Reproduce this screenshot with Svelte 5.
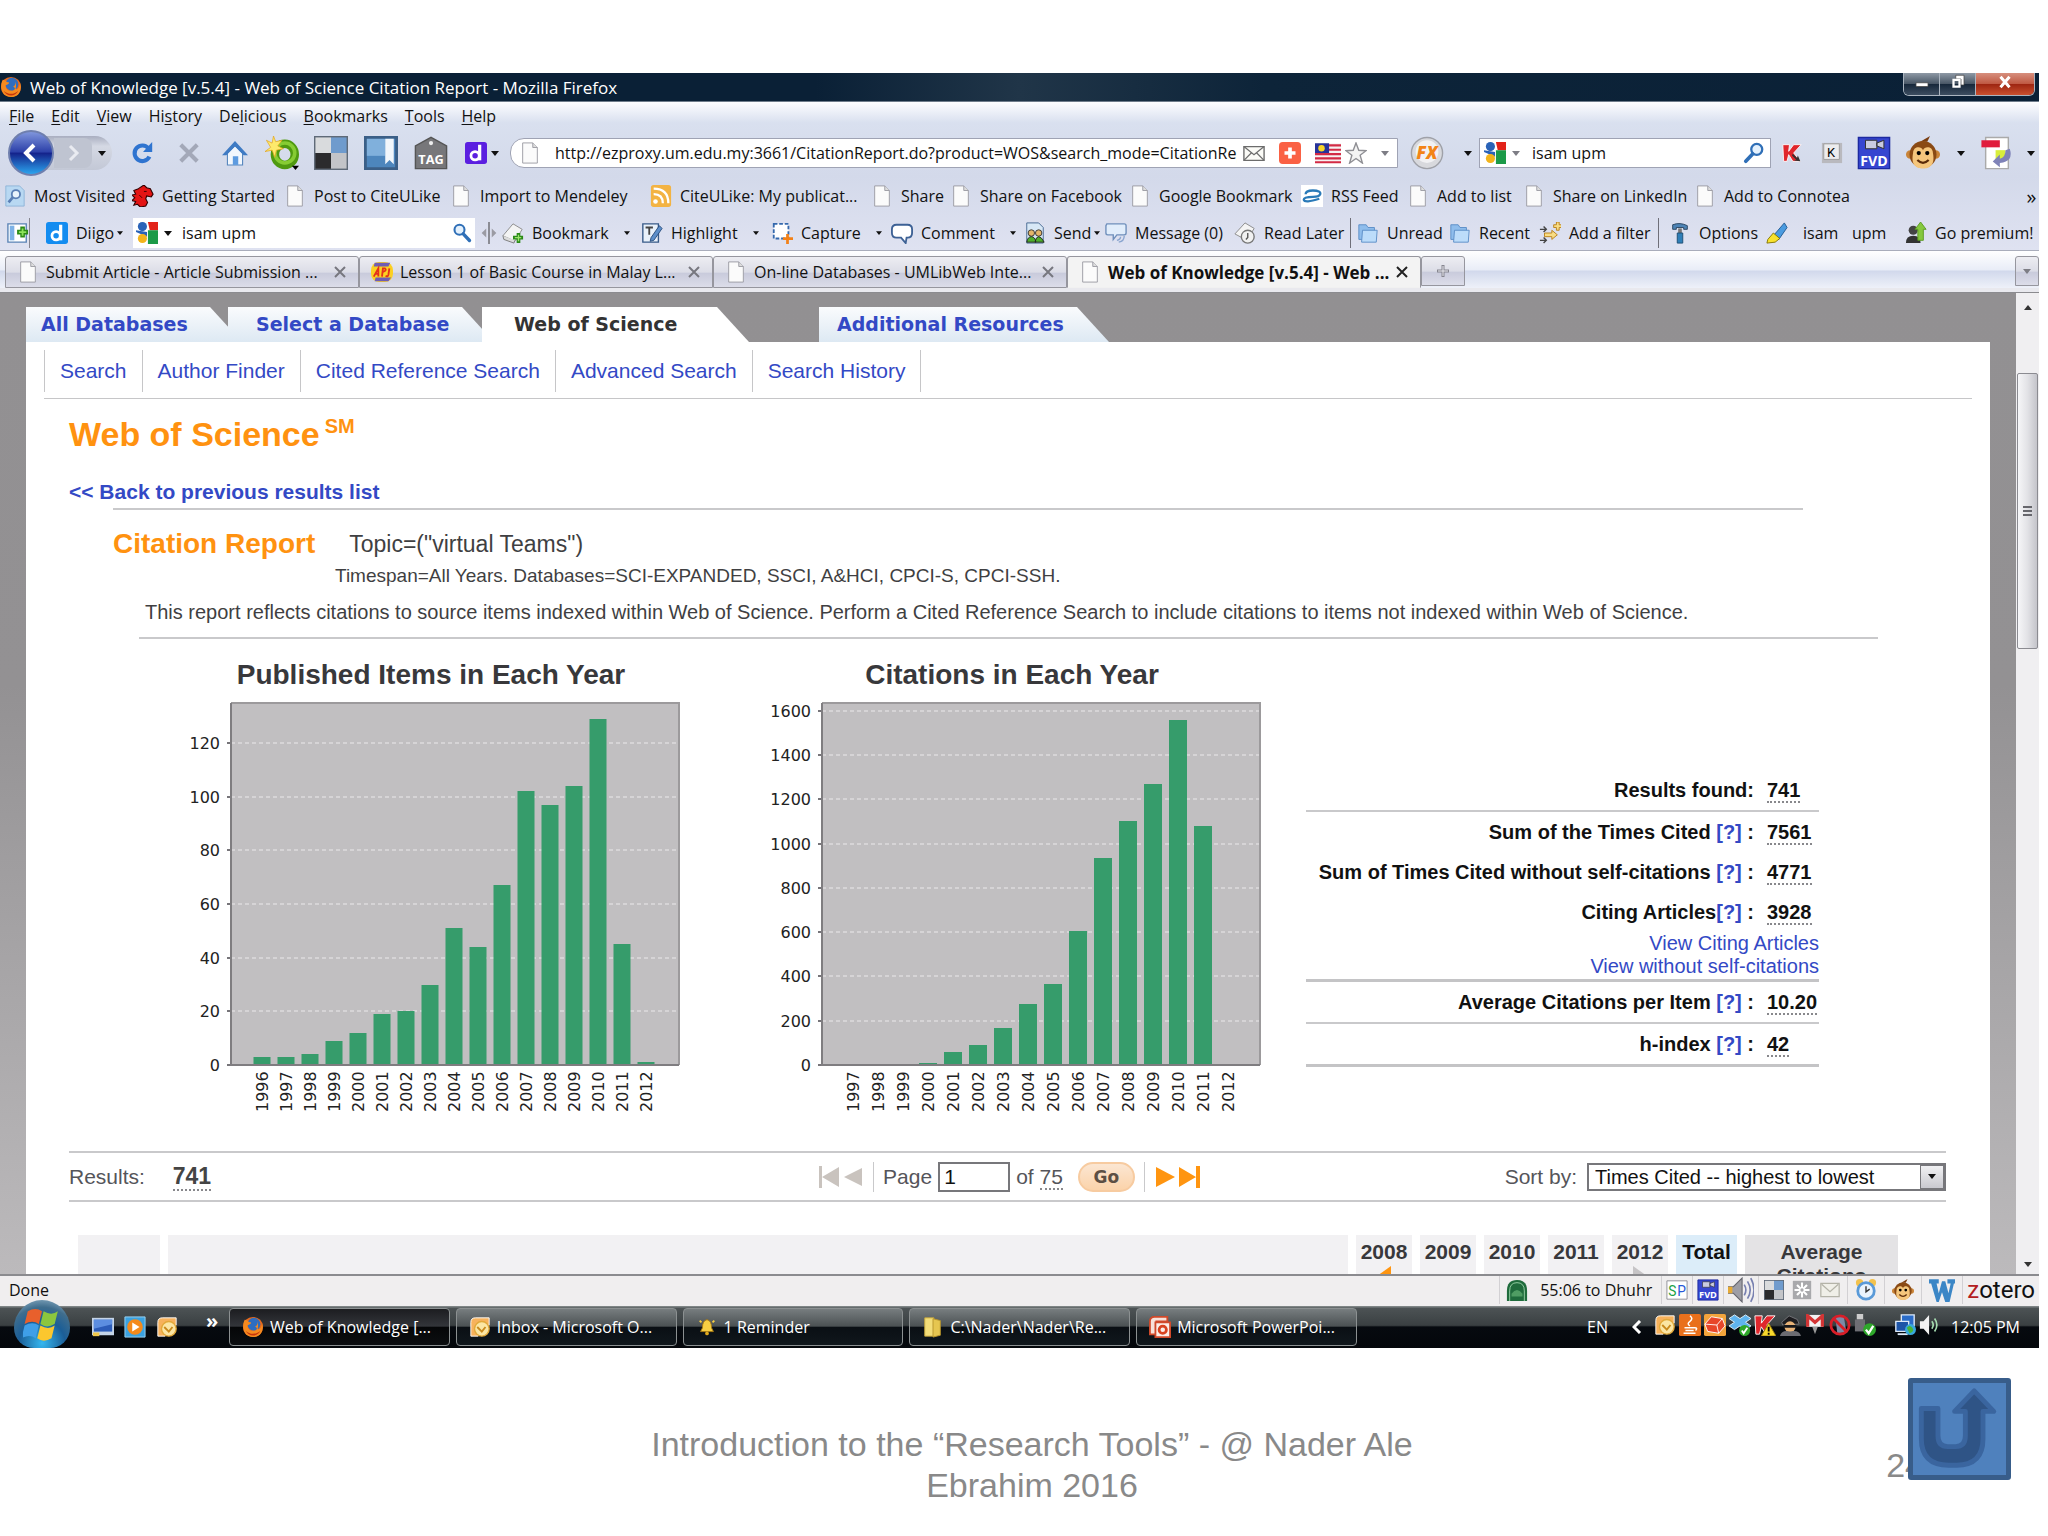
<script lang="ts">
	type Item = { label: string; icon: string; menu?: boolean };
	type Chart = {
		title: string;
		left: number;
		first: number;
		step: number;
		barWidth: number;
		max: number;
		tick: number;
		startYear: number;
		values: number[];
	};

	const page = '<path d="M4 1h11l5 5v17H4z" fill="#fbfbfb" stroke="#9a9aa2"/><path d="M15 1v5h5" fill="#ddd" stroke="#9a9aa2"/>';
	const folder = '<path d="M2 3h8l2 3h7v13H2z" fill="#8fbdec" stroke="#5a8cc6"/><path d="M6 9h16l-1 13H5z" fill="#bcdcfa" stroke="#5a8cc6"/>';
	const google = '<path d="M0 0h24v24H0z" fill="#fff"/><path d="M13 0h11v9h-9z" fill="#e2231a"/><path d="M13 9h11v15H13z" fill="#1c9a48"/><circle cx="7" cy="5" r="5" fill="#2a63b8"/><path d="M0 9l12 2v5L0 11z" fill="#2a63b8"/><circle cx="7" cy="18" r="5" fill="#f3b41b"/>';
	const fvd = '<path d="M1 1h22v22H1z" fill="#3646d0" stroke="#1c29a0"/><path d="M6 3h8v6H6zM14 5l5-2v6l-5-2z" fill="#c9cbe0" stroke="#333" stroke-width=".7"/><text x="12" y="21" font-size="10" font-weight="700" font-family="Open Sans, sans-serif" text-anchor="middle" fill="#fff">FVD</text>';
	const monkey = '<path d="M10 4l7-4-2 4z" fill="#7a3d10"/><circle cx="3" cy="13" r="3" fill="#c98438"/><circle cx="21" cy="13" r="3" fill="#c98438"/><circle cx="12" cy="13" r="9.500" fill="#8a4a14"/><path d="M5 12c0-5 6-5 7-2 1-3 7-3 7 2 2 10-4 11-7 11s-9-1-7-11z" fill="#f5c67c"/><circle cx="9" cy="12" r="1.500"/><circle cx="15" cy="12" r="1.500"/><path d="M8 17q4 4 8 0" fill="none" stroke="#5a2a08" stroke-width="1.500"/>';
	const firefox = '<circle cx="12" cy="12" r="11" fill="#e8691c"/><circle cx="13" cy="9" r="7" fill="#2f6dc0"/><path d="M13 2c5 3 5 8 1 10 3 0 3 3 0 4-5 1-8-2-8-6 2-1 4-1 4-3-2 0-3 0-4-2L3 4C-1 12 2 23 12 23c9 0 12-8 10-15-1 6-4 8-5 6 1-4 1-9-4-12z" fill="#f58a1f"/><path d="M4 16c3 7 13 7 16 0-4 4-11 5-16 0z" fill="#c9360c"/>';
	const outlook = '<path d="M2 22V7q0-5 5-5h15v8H10v12z" fill="#f7b25c" stroke="#fff"/><circle cx="14" cy="14" r="8" fill="#fbe6a4" stroke="#e2a93a" stroke-width="1.500"/><path d="M9 12l5 5 4-5" fill="none" stroke="#c98a1c" stroke-width="2"/>';
	const kaspersky = '<path d="M1 2h8l-1 8 6-8h9l-9 10 8 10h-9l-5-8-2 8H2z" fill="#e0262c" stroke="#fff"/>';
	const magnifier = '<circle cx="15" cy="8" r="6" fill="#e4f1fd" stroke="#2f6fb7" stroke-width="2.500"/><path d="M10.500 13L3 21" stroke="#2f6fb7" stroke-width="4" stroke-linecap="round"/>';
	const squares = '<path d="M0 0h24v24H0z" fill="#5f6a78"/><path d="M1 1h11v11H1z" fill="#d9dbdd"/><path d="M12 1h11v11H12z" fill="#6f9bcd"/><path d="M1 12h11v11H1z" fill="#2b2b2d"/><path d="M12 12h11v11H12z" fill="#c3c4c8"/>';
	const envelope = '<path d="M1 5h22v15H1z" fill="#fbfbf7" stroke="#6c6c6c" stroke-width="1.500"/><path d="M1 5l11 9 11-9M1 20l8-8M23 20l-8-8" fill="none" stroke="#6c6c6c" stroke-width="1.300"/>';

	const icons: Record<string, string> = {
		page,
		folder,
		google,
		fvd,
		monkey,
		firefox,
		outlook,
		kaspersky,
		magnifier,
		squares,
		envelope,
		reload: '<path d="M19 16a8.500 8.500 0 1 1-1-9" fill="none" stroke="#2f74d0" stroke-width="4.500"/><path d="M22 0v11H12z" fill="#2f74d0"/>',
		stop: '<path d="M3 3l18 18M21 3L3 21" stroke="#a3a8b8" stroke-width="4.500"/>',
		home: '<path d="M5 12v11h14V12l-7-7z" fill="#f2f7fd" stroke="#5585bd"/><path d="M0 14L12 1l12 13h-4l-8-8-8 8z" fill="#3f7bc4"/><path d="M10 15h5v8h-5z" fill="#5d9be0"/>',
		ring: '<ellipse cx="14" cy="13" rx="7" ry="7.500" fill="none" stroke="#4f9a10" stroke-width="6"/><ellipse cx="14" cy="12" rx="7" ry="7" fill="none" stroke="#86cc33" stroke-width="2.500"/><path d="M6 0l1.500 4L12 3 9 7l4 2-5 1-1 5-2-5-5 1 4-3-3-5 4 2z" fill="#fdea6c" stroke="#e2a51e" stroke-width=".5"/><path d="M19 21h5l-2.500 3z"/>',
		bluemark: '<path d="M1 1h22v22H1z" fill="#4d86bd" stroke="#3b5f87" stroke-width="2"/><path d="M2 2h13v12H2z" fill="#80b0dc"/><path d="M15 2h6v18l-3-3-3 3z" fill="#f1f6fb"/>',
		tag: '<path d="M1 23V7l11-6 11 6v16z" fill="#77777a" stroke="#555"/><circle cx="12" cy="5" r="1.500" fill="#eee"/><text x="12" y="20" font-size="9" font-weight="700" font-family="Open Sans, sans-serif" text-anchor="middle" fill="#fff">TAG</text>',
		purpled: '<rect width="24" height="24" rx="3" fill="#5b1fe0"/><circle cx="11" cy="15" r="4.500" fill="none" stroke="#fff" stroke-width="3"/><path d="M16 3v17" stroke="#fff" stroke-width="3.500"/>',
		blued: '<rect width="24" height="24" rx="3" fill="#138cf0"/><circle cx="11" cy="15" r="4.500" fill="none" stroke="#fff" stroke-width="3"/><path d="M16 3v17" stroke="#fff" stroke-width="3.500"/>',
		addthis: '<rect width="24" height="24" rx="4" fill="#fa6144"/><path d="M12 6v12M6 12h12" stroke="#fff" stroke-width="4"/>',
		flag: '<path d="M0 3h24v18H0z" fill="#f6f2f2"/><path d="M0 5h24M0 9h24M0 13h24M0 17h24M0 20.500h24" stroke="#d32b45" stroke-width="2"/><path d="M0 3h13v9H0z" fill="#27339a"/><circle cx="6" cy="7.500" r="3" fill="#f7d529"/>',
		star: '<path d="M12 1l3 8 8 .5-6.500 5L19 23l-7-5-7 5 2.500-8.500L1 9.500 9 9z" fill="#f4f4f4" stroke="#8f8f94" stroke-width="1.500"/>',
		fx: '<circle cx="12" cy="12" r="11" fill="#d8d9dd" stroke="#9fa1a8"/><circle cx="12" cy="11" r="8" fill="#f1f1f3"/><text x="12" y="16.500" font-size="12" font-weight="800" font-style="italic" font-family="Open Sans, sans-serif" text-anchor="middle" fill="#f38416">FX</text>',
		kasp: kaspersky + '<path d="M13 13l5 5 1-3 3 7-8-1 3-1-5-5z" fill="#333"/>',
		key: '<path d="M1 1h22v22H1z" fill="#b9b9be"/><path d="M3 2h17v17H3z" fill="#ececee" stroke="#999"/><text x="11" y="16" font-size="14" font-family="Roboto, sans-serif" text-anchor="middle">K</text>',
		pdf: '<path d="M4 1h16v22H4z" fill="#fff" stroke="#aaa"/><path d="M1 3h13v5H1z" fill="#e01c3c"/><path d="M11 10h7v7h-7z" fill="#d8ee3c"/><path d="M21 9q3 9-7 10v3l-5-4 5-5v3q4-1 4-6z" fill="#7f83b8"/>',
		visited: '<path d="M2 1h15l5 5v17H2z" fill="#b8d8f2" stroke="#8db4d8"/><circle cx="13" cy="10" r="4.500" fill="#e8f3fc" stroke="#5a7fb5" stroke-width="2"/><path d="M10 13l-5 6" stroke="#5a7fb5" stroke-width="3"/>',
		dragon: '<path d="M7 4l6-4 3 3 4 1 3 6-2 3-5-1-1 3 2 4-2 4-6 1-3-3-4 1 2-4-4-1 3-3-3-3 4-1-2-4z" fill="#e31414" stroke="#300" stroke-width="1.200"/><path d="M13 7h3M8 11l3 3" stroke="#300"/>',
		rss: '<rect x="1" width="22" height="24" rx="3" fill="#f3b343"/><circle cx="6" cy="18" r="2.500" fill="#fff"/><path d="M4 10q10 0 10 10M4 4q16 0 16 16" fill="none" stroke="#fff" stroke-width="2.500"/>',
		swirl: '<path d="M0 0h24v24H0z" fill="#fff"/><path d="M5 10q0-4 8-4 9 0 8 4-1 3-8 3-10 0-10 3 1 4 17-1" fill="none" stroke="#2a7ab8" stroke-width="2.500"/>',
		sidebar: '<path d="M1 2h20v20H1z" fill="#fff" stroke="#5a83b5" stroke-width="1.500"/><path d="M3 4h5v16H3z" fill="#7db2e6"/><path d="M17 5v12M11 11h12" stroke="#2b8a17" stroke-width="5"/><path d="M17 7v8M13 11h8" stroke="#8ee35c" stroke-width="2"/>',
		split: '<path d="M12 0v24" stroke="#84848c" stroke-width="2"/><path d="M9 7v10L4 12zM15 7v10l5-5z" fill="#9b9ba3"/>',
		stack: '<path d="M1 15L12 2l10 6-8 13z" fill="#f4f4f4" stroke="#888"/><path d="M1 15l1 4 11 4 1-3" fill="#ddd" stroke="#777"/><path d="M18 12v11M12 17h11" stroke="#2b8a17" stroke-width="4"/><path d="M18 14v7M14 17h7" stroke="#9be36a" stroke-width="1.500"/>',
		later: '<path d="M1 13L12 1l10 6-8 13z" fill="#f4f4f4" stroke="#888"/><circle cx="15" cy="16" r="7" fill="#f1f1f1" stroke="#777" stroke-width="1.500"/><path d="M15 12v5l-2 2" fill="none" stroke="#555" stroke-width="1.500"/>',
		highlight: '<path d="M2 2h17v20H2z" fill="#e9f1fa" stroke="#375a88" stroke-width="1.500"/><path d="M5 6h8M9 6v8" stroke="#444" stroke-width="2"/><path d="M20 4l3 3-9 13-4 1 1-4z" fill="#5d8fca" stroke="#274c7c"/>',
		capture: '<path d="M3 2h16v16H3z" fill="#fff" stroke="#3569ad" stroke-width="2" stroke-dasharray="4 2"/><path d="M18 13v11M13 18h11" stroke="#f28118" stroke-width="3"/>',
		comment: '<path d="M6 3h12q5 0 5 5v4q0 5-5 5h-1l-1 6-5-6H6q-5 0-5-5V8q0-5 5-5z" fill="#fff" stroke="#3d6195" stroke-width="2"/>',
		send: '<path d="M3 1h13l5 5v17H3z" fill="#d8e8f6" stroke="#42658f"/><circle cx="8" cy="12" r="3.500" fill="#e3b56a" stroke="#333"/><circle cx="16" cy="12" r="3.500" fill="#e3b56a" stroke="#333"/><path d="M3 22q1-6 5-6t5 6zM12 22q1-6 4-6t6 6z" fill="#4fae2b" stroke="#222"/>',
		message: '<path d="M2 2h19q2 0 2 2v8q0 2-2 2h-8l-4 5v-5H3q-2 0-2-2V4z" fill="#e1edfb" stroke="#6f8fbb" stroke-width="1.500"/><path d="M21 15q0 6-6 7M17 16q0 3-4 4" fill="none" stroke="#8aa5cf" stroke-width="1.500"/>',
		filter: '<path d="M1 8h7M5 5l3 3-3 3M1 20h7M5 17l3 3-3 3" fill="none" stroke="#444" stroke-width="1.500"/><path d="M6 12h8v-3l6 5-6 5v-3H6zM16 3h3V0h3v3h3v3h-3v3h-3V6h-3z" fill="#f8dc83" stroke="#b97f16"/>',
		hammer: '<path d="M4 3q8-3 16 1v4h-4V6H8v2H4z" fill="#4d83b5" stroke="#29445f"/><path d="M10 7h4v6h-4z" fill="#777"/><path d="M9 12h6v11H9z" fill="#2f7fb8" stroke="#1d4d72"/>',
		pen: '<path d="M20 1l3 5-9 13-6-4z" fill="#4a9be0" stroke="#225a90"/><path d="M8 12l7 6-5 4-9 1 1-4z" fill="#f8e22d" stroke="#837400"/>',
		premium: '<circle cx="9" cy="9" r="5" fill="#444"/><path d="M1 23q0-8 8-8t8 8z" fill="#333"/><path d="M14 20V8h-3l6-8 6 8h-3v12z" fill="#85c83e" stroke="#5a9a20"/>',
		lesson: '<rect x="0" y="1" width="24" height="22" rx="9" fill="#fbd022"/><path d="M4 2h17l-2 4H3zM5 18h17l-3 4H4z" fill="#6f5cb4"/><path d="M3 17l5-9v9M4 14h4M12 17l1-9h2q3 2-2 4M20 8l-1 7q-1 3-3 1" fill="none" stroke="#e3311b" stroke-width="2"/>',
		arch: '<path d="M1 24V13q0-12 11-12t11 12v11z" fill="#1f6b3c"/><path d="M4 24V13q0-9 8-9t8 9v11" fill="none" stroke="#9ad3a8"/><path d="M6 16q6-8 12 0v3H6z" fill="#4f9d63"/>',
		sp: '<path d="M1 2h22v20H1z" fill="#fff" stroke="#8c8c95"/><text x="7" y="18" font-size="15" font-family="Roboto, sans-serif" text-anchor="middle" fill="#1ba045">S</text><text x="17" y="18" font-size="15" font-family="Roboto, sans-serif" text-anchor="middle" fill="#2858d8">P</text>',
		speaker: '<path d="M0 9h5l8-8v22l-8-8H0z" fill="#9d9da5" stroke="#66666e"/><path d="M0 9h4v6H0z" fill="#e6a934"/><path d="M15 7q3 5 0 10M18 4q5 8 0 16M21 1q6 11 0 22" fill="none" stroke="#7880b0" stroke-width="1.500"/>',
		snow: '<path d="M1 1h22v22H1z" fill="#a9a9ac"/><path d="M12 3v18M3 12h18M6 6l12 12M18 6L6 18" stroke="#fff" stroke-width="2.500"/><circle cx="12" cy="12" r="2" fill="#a9a9ac"/>',
		mail: '<path d="M1 4h22v16H1z" fill="#f0efe8" stroke="#b4b3a8" stroke-width="1.500"/><path d="M2 5l10 9 10-9" fill="none" stroke="#b4b3a8" stroke-width="1.500"/>',
		clock: '<circle cx="5" cy="4" r="4" fill="#f3c24d"/><circle cx="19" cy="4" r="4" fill="#f3c24d"/><circle cx="12" cy="13" r="9" fill="#eaf4fd" stroke="#5a9ad8" stroke-width="3"/><path d="M12 8v6l4-3" fill="none" stroke="#333" stroke-width="1.500"/>',
		wletter: '<path d="M0 2h9v4H7l2 9 3-11h3l3 11 2-9h-3V2h7v4h-1l-4 17h-4l-3-9-3 9H7L2 6H0z" fill="#3b86c6"/>',
		desktop: '<path d="M0 2h24v19H0z" fill="#c4d4e8"/><path d="M2 4h20v13H2z" fill="#2c5cb8"/><path d="M2 4h20v5L2 14z" fill="#5c8ee0"/><path d="M1 18h7v4H1z" fill="#f0c84b"/>',
		media: '<path d="M1 1h22v22H1z" fill="#3ba2e0" stroke="#9ed6f6"/><circle cx="12" cy="12" r="8.500" fill="#f48a1b"/><path d="M9 7l8 5-8 5z" fill="#fff"/>',
		bell: '<path d="M12 4q5 1 5 9l2 4H5l2-4q0-8 5-9z" fill="#f7cf43" stroke="#a87912"/><circle cx="12" cy="19" r="2" fill="#e0a91f"/><path d="M4 5l2 2M20 5l-2 2" stroke="#f7cf43" stroke-width="2"/>',
		folders: '<path d="M3 2h10v20H3z" fill="#f3dd78" stroke="#c9a93a"/><path d="M12 3l8 2v16l-8 2z" fill="#e6c650" stroke="#b8942a"/>',
		ppt: '<path d="M1 20V6q0-5 5-5h14v5H8v14z" fill="#f7e2da" stroke="#d0492a" stroke-width="2"/><path d="M7 7h16v16H7z" fill="#fbeee8" stroke="#d0492a" stroke-width="2"/><circle cx="15" cy="15" r="4" fill="none" stroke="#d8421f" stroke-width="3"/>',
		java: '<rect width="24" height="24" rx="2" fill="#e9701c"/><path d="M12 2q4 3 0 6t0 5M6 15h11M7 18h9M5 21h13M17 15q4 0 1 3" fill="none" stroke="#fff" stroke-width="1.600"/>',
		box: '<rect width="24" height="24" rx="2" fill="#f3a43c"/><path d="M8 3l12 2 3 8-7 8-12-2-3-8z" fill="#e8472a" stroke="#fff"/><path d="M1 11l13 1 6-7M14 12l2 9" fill="none" stroke="#fff"/>',
		dropbox: '<path d="M6 1l6 4 6-4 6 4-6 4 6 4-6 4-6-4-6 4-6-4 6-4-6-4z" fill="#5fb4ee" stroke="#e4f4fe"/><circle cx="17" cy="18" r="6" fill="#2ea82a"/><path d="M14 18l2 3 4-6" fill="none" stroke="#fff" stroke-width="2"/>',
		kwarn: kaspersky + '<path d="M16 10l8 14H8z" fill="#f8d92c" stroke="#96780c"/><path d="M16 14v5M16 20.500v2" stroke="#000" stroke-width="2"/>',
		agent: '<path d="M3 9l8-7 9 4 2 5-18 1z" fill="#1d1d20" stroke="#77777c"/><circle cx="12" cy="14" r="6" fill="#e8b377"/><path d="M5 12h14v3H5z" fill="#18181a"/><path d="M1 24q2-7 11-5 10-2 12 5z" fill="#6c6c72"/>',
		gmail: '<path d="M3 1h18v13H3z" fill="#f2f2f2"/><path d="M4 14V2l8 7 8-7v12" fill="none" stroke="#d33434" stroke-width="3.500"/><path d="M9 14h6l-3 8z" fill="#999"/>',
		blocked: '<path d="M7 3l9-1 3 18-10 1z" fill="#7c8aa8"/><circle cx="12" cy="12" r="10" fill="none" stroke="#d81e28" stroke-width="3"/><path d="M5 5l14 14" stroke="#d81e28" stroke-width="3"/>',
		usb: '<path d="M3 0h7v6H3z" fill="#ccc"/><path d="M1 6h11v13H1z" fill="#6e6e74"/><circle cx="17" cy="17" r="7" fill="#2ea82a"/><path d="M13 17l3 4 5-8" fill="none" stroke="#fff" stroke-width="2.500"/>',
		network: '<path d="M8 1h14v12H8z" fill="#2a6cc8" stroke="#dce9f8" stroke-width="1.500"/><path d="M2 8h14v11H2z" fill="#1d55a8" stroke="#dce9f8" stroke-width="1.500"/><path d="M4 22h11" stroke="#dce9f8" stroke-width="2"/><circle cx="18" cy="17" r="6" fill="#39a8dc"/><path d="M14 15q3-4 6 0t-3 6z" fill="#47b53a"/>',
		volume: '<path d="M1 8h4l6-7v22l-6-7H1z" fill="#f2f2f2"/><path d="M14 8q3 4 0 8M17 5q5 7 0 14" fill="none" stroke="#a6dcb0" stroke-width="1.800"/>',
		windows: '<path d="M3 4q5-3 9 0l-2 8q-4-3-9 0z" fill="#e8602c"/><path d="M13 4q5 3 9 0l-2 8q-5 3-9 0z" fill="#8cc63e"/><path d="M1 13q5-3 9 0l-2 8q-4-3-9 0z" fill="#3f9fe8"/><path d="M11 13q5 3 9 0l-2 8q-5 3-9 0z" fill="#fbc72e"/>'
	};

	const menus = [
		['', 'F', 'ile'],
		['', 'E', 'dit'],
		['', 'V', 'iew'],
		['Hi', 's', 'tory'],
		['De', 'l', 'icious'],
		['', 'B', 'ookmarks'],
		['', 'T', 'ools'],
		['', 'H', 'elp']
	];

	const bookmarks: Item[] = [
		{ label: 'Most Visited', icon: 'visited' },
		{ label: 'Getting Started', icon: 'dragon' },
		{ label: 'Post to CiteULike', icon: 'page' },
		{ label: 'Import to Mendeley', icon: 'page' },
		{ label: 'CiteULike: My publicat...', icon: 'rss' },
		{ label: 'Share', icon: 'page' },
		{ label: 'Share on Facebook', icon: 'page' },
		{ label: 'Google Bookmark', icon: 'page' },
		{ label: 'RSS Feed', icon: 'swirl' },
		{ label: 'Add to list', icon: 'page' },
		{ label: 'Share on LinkedIn', icon: 'page' },
		{ label: 'Add to Connotea', icon: 'page' }
	];

	const diigoTools: Item[] = [
		{ label: 'Bookmark', icon: 'stack', menu: true },
		{ label: 'Highlight', icon: 'highlight', menu: true },
		{ label: 'Capture', icon: 'capture', menu: true },
		{ label: 'Comment', icon: 'comment', menu: true },
		{ label: 'Send', icon: 'send', menu: true },
		{ label: 'Message (0)', icon: 'message' },
		{ label: 'Read Later', icon: 'later' }
	];

	const diigoFilters: Item[] = [
		{ label: 'Unread', icon: 'folder' },
		{ label: 'Recent', icon: 'folder' },
		{ label: 'Add a filter', icon: 'filter' }
	];

	const browserTabs: Item[] = [
		{ label: 'Submit Article - Article Submission ...', icon: 'page' },
		{ label: 'Lesson 1 of Basic Course in Malay L...', icon: 'lesson' },
		{ label: 'On-line Databases - UMLibWeb Inte...', icon: 'page' },
		{ label: 'Web of Knowledge [v.5.4] - Web ...', icon: 'page' }
	];

	const searchLinks = ['Search', 'Author Finder', 'Cited Reference Search', 'Advanced Search', 'Search History'];

	const charts: Chart[] = [
		{
			title: 'Published Items in Each Year',
			left: 60,
			first: 91,
			step: 24,
			barWidth: 17,
			max: 135,
			tick: 20,
			startYear: 1996,
			values: [3, 3, 4, 9, 12, 19, 20, 30, 51, 44, 67, 102, 97, 104, 129, 45, 1]
		},
		{
			title: 'Citations in Each Year',
			left: 70,
			first: 101,
			step: 25,
			barWidth: 18,
			max: 1635,
			tick: 200,
			startYear: 1997,
			values: [0, 0, 0, 8, 58, 90, 168, 277, 365, 607, 937, 1103, 1268, 1558, 1080, 0]
		}
	];

	const plotTop = 12;
	const plotBottom = 374;
	const plotRight = 508;

	function barHeight(chart: Chart, value: number) {
		return Math.round((value / chart.max) * (plotBottom - plotTop));
	}

	function ticks(chart: Chart) {
		const list: number[] = [];
		for (let t = 0; t < chart.max; t += chart.tick) list.push(t);
		return list;
	}

	const years = ['2008', '2009', '2010', '2011', '2012'];

	const tasks: Item[] = [
		{ label: 'Web of Knowledge [...', icon: 'firefox' },
		{ label: 'Inbox - Microsoft O...', icon: 'outlook' },
		{ label: '1 Reminder', icon: 'bell' },
		{ label: 'C:\\Nader\\Nader\\Re...', icon: 'folders' },
		{ label: 'Microsoft PowerPoi...', icon: 'ppt' }
	];

	const tray = ['outlook', 'java', 'box', 'dropbox', 'kwarn', 'agent', 'gmail', 'blocked', 'usb'];

	let activeTab = $state(3);
	let activeTask = $state(0);
	let url = $state('http://ezproxy.um.edu.my:3661/CitationReport.do?product=WOS&search_mode=CitationReport');
	let query = $state('isam upm');
	let diigoQuery = $state('isam upm');
	let pageNumber = $state('1');
</script>

{#snippet icon(name: string, size = 'md')}
	<svg class="icon {size}" viewBox="0 0 24 24" aria-hidden="true">{@html icons[name]}</svg>
{/snippet}

{#snippet caret()}
	<svg class="caret" viewBox="0 0 8 5" aria-hidden="true"><path d="M0 0h8L4 5z" fill="currentColor" /></svg>
{/snippet}

<div class="slide">
	<div class="window">
		<header class="titlebar">
			{@render icon('firefox')}
			<span class="title">Web of Knowledge [v.5.4] - Web of Science Citation Report - Mozilla Firefox</span>
			<div class="window-buttons">
				<button type="button" aria-label="Minimize"><svg viewBox="0 0 24 24"><path d="M4 13h16v5H4z" fill="#fff" stroke="#444" /></svg></button>
				<button type="button" aria-label="Restore">
					<svg viewBox="0 0 24 24"><path d="M9 3h11v13h-4V8H9z" fill="#fff" stroke="#444" /><path d="M6 9h8v9H6z" fill="none" stroke="#fff" stroke-width="3" /></svg>
				</button>
				<button type="button" class="close" aria-label="Close"><svg viewBox="0 0 24 24"><path d="M6 5l12 14M18 5L6 19" stroke="#fff" stroke-width="4" /></svg></button>
			</div>
		</header>

		<div class="toolbox">
			<nav class="menubar">
				{#each menus as [before, key, after]}
					<button type="button">{before}<u>{key}</u>{after}</button>
				{/each}
			</nav>

			<div class="navbar">
				<div class="history">
					<button type="button" class="back" aria-label="Back"><svg viewBox="0 0 24 24"><path d="M15 4l-8 8 8 8" fill="none" stroke="#fff" stroke-width="4" /></svg></button>
					<button type="button" class="forward" aria-label="Forward"><svg viewBox="0 0 24 24"><path d="M9 5l7 7-7 7" fill="none" stroke="#e9ebf1" stroke-width="3" /></svg></button>
					{@render caret()}
				</div>
				<button type="button" aria-label="Reload">{@render icon('reload')}</button>
				<button type="button" aria-label="Stop">{@render icon('stop')}</button>
				<button type="button" aria-label="Home">{@render icon('home', 'lg')}</button>
				<button type="button" aria-label="Add-on">{@render icon('ring', 'xl')}</button>
				<button type="button" aria-label="Delicious">{@render icon('squares', 'xl')}</button>
				<button type="button" aria-label="Delicious bookmarks">{@render icon('bluemark', 'xl')}</button>
				<button type="button" aria-label="Tag">{@render icon('tag', 'xl')}</button>
				<button type="button" aria-label="Diigo">{@render icon('purpled')}{@render caret()}</button>
				<div class="field url">
					{@render icon('page')}
					<input aria-label="Address" bind:value={url} />
					<span class="url-icons">
						{@render icon('envelope')}
						{@render icon('addthis')}
						{@render icon('flag', 'lg')}
						<span class="muted starred">{@render icon('star')}{@render caret()}</span>
					</span>
				</div>
				<button type="button" aria-label="FX">{@render icon('fx', 'xl')}</button>
				<button type="button" aria-label="FX menu">{@render caret()}</button>
				<div class="field search">
					{@render icon('google')}
					<span class="muted">{@render caret()}</span>
					<input aria-label="Search" bind:value={query} />
					{@render icon('magnifier')}
				</div>
				<button type="button" aria-label="Kaspersky">{@render icon('kasp', 'sm')}</button>
				<button type="button" aria-label="Keyboard">{@render icon('key')}</button>
				<button type="button" aria-label="Video downloader">{@render icon('fvd', 'xl')}</button>
				<button type="button" aria-label="Monkey">{@render icon('monkey', 'xl')}</button>
				<button type="button" aria-label="Monkey menu">{@render caret()}</button>
				<button type="button" aria-label="PDF">{@render icon('pdf', 'xl')}</button>
				<button type="button" aria-label="PDF menu">{@render caret()}</button>
			</div>

			<nav class="bookmarks">
				{#each bookmarks as item}
					<button type="button" class="tool">{@render icon(item.icon)}<span>{item.label}</span></button>
				{/each}
				<button type="button" class="more" aria-label="More bookmarks">»</button>
			</nav>

			<div class="diigo">
				<button type="button" class="tool ruled" aria-label="Sidebar">{@render icon('sidebar')}</button>
				<button type="button" class="tool">{@render icon('blued')}<span>Diigo</span>{@render caret()}</button>
				<div class="field diigo-search">
					{@render icon('google')}
					{@render caret()}
					<input aria-label="Diigo search" bind:value={diigoQuery} />
					{@render icon('magnifier', 'sm flip')}
				</div>
				{@render icon('split')}
				{#each diigoTools as item}
					<button type="button" class="tool">
						{@render icon(item.icon)}<span class:spaced={item.menu && item.label !== 'Send'}>{item.label}</span>
						{#if item.menu}{@render caret()}{/if}
					</button>
				{/each}
				<span class="divider"></span>
				{#each diigoFilters as item}
					<button type="button" class="tool">{@render icon(item.icon)}<span>{item.label}</span></button>
				{/each}
				<span class="divider"></span>
				<button type="button" class="tool">{@render icon('hammer')}<span>Options</span></button>
				<button type="button" class="tool wide">{@render icon('pen')}<span>isam</span></button>
				<button type="button" class="tool"><span>upm</span></button>
				<button type="button" class="tool">{@render icon('premium')}<span>Go premium!</span></button>
			</div>
		</div>

		<div class="tabstrip">
			{#each browserTabs as tab, i}
				<div class="tab" data-active={activeTab === i}>
					<button type="button" class="tab-label" onclick={() => (activeTab = i)}>{@render icon(tab.icon)}<span>{tab.label}</span></button>
					<button type="button" class="tab-close" aria-label="Close tab"><svg viewBox="0 0 12 12"><path d="M1 1l10 10M11 1L1 11" stroke="currentColor" stroke-width="2" /></svg></button>
				</div>
			{/each}
			<button type="button" class="tab new" aria-label="New tab"><svg viewBox="0 0 12 12"><path d="M6 0v12M0 6h12" stroke="#85858f" stroke-width="3" /><path d="M6 1v10M1 6h10" stroke="#e9e9ef" /></svg></button>
			<button type="button" class="tab list muted" aria-label="List tabs">{@render caret()}</button>
		</div>

		<div class="viewport">
			<main>
				<nav class="wos-tabs">
					<a href="#all" class="one">All Databases</a>
					<a href="#select" class="two">Select a Database</a>
					<a href="#wos" class="three">Web of Science</a>
					<a href="#more" class="four">Additional Resources</a>
				</nav>

				<div class="sheet">
					<nav class="subnav">
						{#each searchLinks as link}
							<a href="#search">{link}</a>
						{/each}
					</nav>

					<h1>Web of Science <sup>SM</sup></h1>
					<a class="back-link" href="#results">&lt;&lt; Back to previous results list</a>

					<section class="report-head">
						<div class="topic">
							<h2>Citation Report</h2>
							<span>Topic=("virtual Teams")</span>
						</div>
						<p class="timespan">Timespan=All Years. Databases=SCI-EXPANDED, SSCI, A&amp;HCI, CPCI-S, CPCI-SSH.</p>
					</section>
					<p class="note">This report reflects citations to source items indexed within Web of Science. Perform a Cited Reference Search to include citations to items not indexed within Web of Science.</p>

					<section class="overview">
						<div class="charts">
							{#each charts as chart}
								<figure>
									<figcaption>{chart.title}</figcaption>
									<svg class="chart" viewBox="0 0 520 425">
										<rect x={chart.left} y={plotTop} width={plotRight - chart.left} height={plotBottom - plotTop} fill="#c1bfc1" />
										{#each ticks(chart) as t}
											{@const y = plotBottom - barHeight(chart, t)}
											<path d="M{chart.left - 4} {y}h4" stroke="#77757a" stroke-width="2" />
											{#if t > 0}
												<path d="M{chart.left} {y}H{plotRight}" stroke="#d6d4d6" stroke-width="2" stroke-dasharray="4 3" />
											{/if}
											<text x={chart.left - 11} y={y + 6} text-anchor="end">{t}</text>
										{/each}
										{#each chart.values as value, i}
											{@const x = chart.first + i * chart.step}
											{@const h = barHeight(chart, value)}
											<rect x={x - chart.barWidth / 2} y={plotBottom - h} width={chart.barWidth} height={h} fill="#369c6b" />
											<text class="year" transform="translate({x + 6} 421) rotate(-90)">{chart.startYear + i}</text>
										{/each}
										<path d="M{chart.left} {plotTop}H{plotRight}V{plotBottom}" fill="none" stroke="#9c9a9c" stroke-width="2" />
										<path d="M{chart.left} {plotTop}V{plotBottom}H{plotRight}" fill="none" stroke="#7f7d80" stroke-width="2" />
									</svg>
								</figure>
							{/each}
						</div>

						<table class="stats">
							<tbody>
								<tr class="line"><th>Results found:</th><td><span>741</span></td></tr>
								<tr><th>Sum of the Times Cited <a href="#help">[?]</a> :</th><td><span>7561</span></td></tr>
								<tr><th>Sum of Times Cited without self-citations <a href="#help">[?]</a> :</th><td><span>4771</span></td></tr>
								<tr><th>Citing Articles<a href="#help">[?]</a> :</th><td><span>3928</span></td></tr>
								<tr class="links thick">
									<td colspan="2"><a href="#citing">View Citing Articles</a><a href="#self">View without self-citations</a></td>
								</tr>
								<tr class="line"><th>Average Citations per Item <a href="#help">[?]</a> :</th><td><span>10.20</span></td></tr>
								<tr class="thick"><th>h-index <a href="#help">[?]</a> :</th><td><span>42</span></td></tr>
							</tbody>
						</table>
					</section>

					<div class="results">
						<div class="count">Results: <strong>741</strong></div>
						<div class="pager">
							<span class="steps">
								<button type="button" aria-label="First page"><svg viewBox="0 0 22 24"><path d="M1 1h3v22H1zM21 2v20L4 12z" fill="#c9c3be" /></svg></button>
								<button type="button" aria-label="Previous page"><svg viewBox="0 0 22 24"><path d="M20 3v18L2 12z" fill="#c9c3be" /></svg></button>
							</span>
							<span class="rule"></span>
							<span class="page-field">
								<label for="page-number">Page</label>
								<input id="page-number" bind:value={pageNumber} />
								<span>of <span class="dotted">75</span></span>
							</span>
							<button type="button" class="go">Go</button>
							<span class="rule"></span>
							<span class="steps">
								<button type="button" aria-label="Next page"><svg viewBox="0 0 22 24"><path d="M2 2v20l19-10z" fill="#ff9510" /></svg></button>
								<button type="button" aria-label="Last page"><svg viewBox="0 0 22 24"><path d="M1 2v20l17-10zM18 1h4v22h-4z" fill="#ff9510" /></svg></button>
							</span>
						</div>
						<div class="sort">
							<label for="sort">Sort by:</label>
							<div class="select">
								<select id="sort">
									<option>Times Cited -- highest to lowest</option>
								</select>
								<span class="select-button">{@render caret()}</span>
							</div>
						</div>
					</div>

					<div class="table-clip">
						<table class="cited">
							<thead>
								<tr>
									<th class="number"></th>
									<th class="record"></th>
									{#each years as year, i}
										<th class="year-cell">
											{year}
											{#if i === 0}
												<svg viewBox="0 0 14 20"><path d="M14 0v20L0 10z" fill="#ff9510" /></svg>
											{:else if i === years.length - 1}
												<svg viewBox="0 0 14 20"><path d="M0 0v20l14-10z" fill="#c6c4c6" /></svg>
											{/if}
										</th>
									{/each}
									<th class="total">Total</th>
									<th class="average">Average<br />Citations</th>
								</tr>
							</thead>
						</table>
					</div>
				</div>
			</main>

			<div class="scrollbar">
				<button type="button" class="up" aria-label="Scroll up">{@render caret()}</button>
				<span class="above"></span>
				<span class="thumb"><i></i><i></i><i></i></span>
				<span class="below"></span>
				<button type="button" aria-label="Scroll down">{@render caret()}</button>
			</div>
		</div>

		<footer class="statusbar">
			<span>Done</span>
			<div class="panels">
				<span class="panel prayer">{@render icon('arch')}55:06 to Dhuhr</span>
				<span class="panel">{@render icon('sp')}</span>
				<span class="panel">{@render icon('fvd')}</span>
				<span class="panel">{@render icon('speaker', 'lg')}</span>
				<span class="panel trio">{@render icon('squares', 'sm')}{@render icon('snow', 'sm')}{@render icon('mail', 'sm')}</span>
				<span class="panel roomy">{@render icon('clock')}</span>
				<span class="panel roomy">{@render icon('monkey')}</span>
				<span class="panel roomy">{@render icon('wletter', 'lg')}</span>
				<span class="panel zotero"><b>z</b>otero</span>
			</div>
		</footer>

		<div class="taskbar">
			<button type="button" class="start" aria-label="Start"><svg viewBox="0 0 24 24">{@html icons.windows}</svg></button>
			<div class="quick">
				{@render icon('desktop')}
				{@render icon('media')}
				{@render icon('outlook')}
				<span>»</span>
			</div>
			<div class="tasks">
				{#each tasks as task, i}
					<button type="button" data-active={activeTask === i} onclick={() => (activeTask = i)}>{@render icon(task.icon)}<span>{task.label}</span></button>
				{/each}
			</div>
			<div class="tray">
				<span class="lang">EN</span>
				<svg class="chevron" viewBox="0 0 10 14" aria-hidden="true"><path d="M8 1L2 7l6 6" fill="none" stroke="#fff" stroke-width="3" /></svg>
				<span class="tray-icons">
					{#each tray as name}
						{@render icon(name)}
					{/each}
				</span>
				<span class="tray-icons system">{@render icon('network')}{@render icon('volume')}</span>
				<time>12:05 PM</time>
			</div>
		</div>
	</div>

	<div class="slide-footer">
		<p>Introduction to the “Research Tools” - @ Nader Ale<br />Ebrahim 2016</p>
		<div class="slide-number">
			<span>24</span>
			<a href="#return" aria-label="Return">
				<svg viewBox="0 0 94 94">
					<path d="M8 26h17v28q0 11 10 11h8q10 0 10-11V29H42L62 8l20 21H71v28q0 27-27 27h-8Q8 84 8 57z" fill="#2f5486" stroke="#3a659f" stroke-width="5" stroke-linejoin="round" />
				</svg>
			</a>
		</div>
	</div>
</div>

<style>
	:global(body) {
		margin: 0;
		background: #fff;
	}

	.slide {
		padding-top: 73px;
		font-family: 'Open Sans', 'Noto Sans', sans-serif;
		font-size: 16px;
		color: #111;
	}

	.window {
		margin-right: 9px;
	}

	button {
		margin: 0;
		padding: 0;
		border: 0;
		background: none;
		font: inherit;
		color: inherit;
		white-space: nowrap;
	}

	input,
	select {
		min-width: 0;
		border: 0;
		outline: 0;
		background: none;
		font: inherit;
		color: inherit;
	}

	a {
		color: #3349c5;
		text-decoration: none;
	}

	p,
	h1,
	h2,
	figure {
		margin: 0;
	}

	.icon {
		flex: none;
		width: 22px;
		height: 22px;
	}

	.icon.sm {
		width: 20px;
		height: 20px;
	}

	.icon.lg {
		width: 26px;
		height: 26px;
	}

	.icon.xl {
		width: 34px;
		height: 34px;
	}

	.icon.flip {
		transform: scaleX(-1);
	}

	.caret {
		flex: none;
		width: 8px;
		height: 5px;
	}

	.muted {
		display: flex;
		align-items: center;
		color: #7d7d85;
	}

	/* title bar */
	.titlebar {
		display: flex;
		align-items: center;
		gap: 8px;
		height: 28px;
		border-bottom: 1px solid #6f7c8b;
		background: linear-gradient(90deg, #0a2036, #0a2036 40%, #203548 50%, #0d2439 62%, #0a2036);
		color: #fff;
	}

	.title {
		flex: 1;
		font-size: 17px;
	}

	.window-buttons {
		display: flex;
		align-self: flex-start;
		margin-right: 4px;
		border: 1px solid #aab4bf;
		border-top: 0;
		border-radius: 0 0 6px 6px;
		overflow: hidden;
	}

	.window-buttons button {
		width: 36px;
		height: 22px;
		border-right: 1px solid #aab4bf;
		background: linear-gradient(#8e99a5, #4a5867 48%, #16273a 50%, #3c4d60);
	}

	.window-buttons .close {
		width: 58px;
		border-right: 0;
		background: linear-gradient(#d78f7e, #c05a44 48%, #9c2410 50%, #c9502f);
	}

	.window-buttons svg {
		width: 18px;
		height: 18px;
	}

	/* toolbars */
	.toolbox {
		border-bottom: 1px solid #a9adbb;
		background: linear-gradient(#fdfdff, #d9e0ef 14%, #d3d9ea 50%, #dfe2f1);
	}

	.menubar {
		display: flex;
		align-items: center;
		gap: 17px;
		height: 28px;
		padding-left: 9px;
	}

	.menubar u {
		text-underline-offset: 2px;
	}

	.navbar {
		display: grid;
		grid-template-columns:
			120fr 46fr 46fr 46fr 48fr 50fr 49fr 51fr 52fr 890fr 58fr 23fr 292fr 41fr 40fr 44fr
			54fr 22fr 50fr 17fr;
		align-items: center;
		height: 46px;
	}

	.navbar > button {
		display: flex;
		align-items: center;
		justify-content: center;
		gap: 4px;
		min-width: 0;
	}

	.history {
		display: flex;
		align-items: center;
		width: 104px;
		height: 34px;
		margin-left: 8px;
		border-radius: 17px;
		background: linear-gradient(#a9aec0, #d5d9e4 30%, #c3c8d6);
	}

	.back {
		width: 46px;
		height: 46px;
		margin: -6px 0;
		border: 2px solid #6f7fae;
		border-radius: 50%;
		background: linear-gradient(#7f95dc, #2b3fa8 48%, #14218a 50%, #2ba4ee);
	}

	.forward {
		width: 38px;
		height: 30px;
		border-radius: 0 8px 8px 0;
		background: #bfc4d1;
	}

	.history .caret {
		margin-left: 6px;
	}

	.back svg,
	.forward svg {
		width: 24px;
		height: 24px;
		vertical-align: middle;
	}

	.field {
		display: flex;
		align-items: center;
		gap: 6px;
		min-width: 0;
		height: 28px;
		border: 1px solid #9fa3b4;
		background: #fff;
	}

	.field input {
		flex: 1;
		padding: 0;
	}

	.url {
		margin-left: 2px;
		padding: 0 8px;
		border-radius: 14px 0 0 14px;
	}

	.url input {
		margin-left: 8px;
	}

	.url-icons {
		display: flex;
		align-items: center;
		gap: 14px;
	}

	.starred {
		gap: 14px;
		margin-left: -10px;
	}

	.search {
		padding: 0 5px 0 4px;
	}

	.search input {
		margin-left: 6px;
	}

	.bookmarks {
		display: grid;
		grid-template-columns: 128fr 152fr 166fr 200fr 221fr 79fr 179fr 172fr 106fr 116fr 171fr 330fr 15fr;
		align-items: center;
		height: 40px;
		padding-left: 4px;
	}

	.more {
		font-size: 20px;
	}

	.tool {
		display: flex;
		align-items: center;
		gap: 8px;
		min-width: 0;
	}

	.tool .caret {
		margin-left: -5px;
		width: 6px;
		height: 4px;
	}

	.spaced {
		margin-right: 12px;
	}

	.diigo {
		display: grid;
		grid-template-columns:
			46fr 87fr 345fr 24fr 139fr 130fr 120fr 133fr 81fr 129fr 115fr 8fr 92fr 90fr 118fr
			12fr 97fr 86fr 53fr 134fr;
		align-items: center;
		height: 34px;
	}

	.ruled {
		width: 30px;
		height: 30px;
		padding-left: 7px;
		border-right: 1px solid #85858f;
	}

	.diigo-search {
		width: 336px;
		padding: 0 2px;
		border-color: #fff;
	}

	.diigo-search input {
		margin-left: 4px;
	}

	.divider {
		width: 1px;
		height: 30px;
		margin-left: 1px;
		background: #6f6f79;
	}

	.wide {
		gap: 15px;
	}

	/* browser tabs */
	.tabstrip {
		display: grid;
		grid-template-columns: 354fr 354fr 354fr 354fr 44fr 574fr;
		padding: 5px 0 0 5px;
		border-bottom: 4px solid #e9e9ee;
		background: linear-gradient(#fff, #e9edf7 50%, #d2d9ec 55%, #eef1f9);
	}

	.tab {
		display: flex;
		align-items: center;
		justify-content: space-between;
		min-width: 0;
		height: 30px;
		border: 1px solid #96969e;
		border-radius: 3px 3px 0 0;
		background: linear-gradient(#ededf2, #dcdde7 50%, #c9cbdc 55%, #dcdde9);
	}

	.tab[data-active='true'] {
		border-bottom-color: #f1f1f1;
		background: #f3f3f3;
		font-size: 17px;
		font-weight: 700;
	}

	.tab-label {
		display: flex;
		align-items: center;
		gap: 7px;
		min-width: 0;
		padding-left: 11px;
	}

	.tab-close {
		margin-right: 12px;
		color: #77777f;
	}

	.tab[data-active='true'] .tab-close {
		color: #222;
	}

	.tab-close svg {
		display: block;
		width: 12px;
		height: 12px;
	}

	.tab.new {
		justify-content: center;
	}

	.tab.new svg {
		width: 12px;
		height: 12px;
	}

	.tab.list {
		justify-content: center;
		justify-self: end;
		width: 24px;
	}

	/* page */
	.viewport {
		display: flex;
		border-top: 1px solid #8b8b8f;
		font-family: 'Liberation Sans', Arial, sans-serif;
	}

	main {
		flex: 1;
		min-width: 0;
		padding: 14px 26px 0;
		background: linear-gradient(#929092, #939193 40%, #bcbabc);
	}

	.wos-tabs {
		display: flex;
		height: 35px;
		font-family: 'DejaVu Sans', Verdana, sans-serif;
		font-size: 19px;
		font-weight: 700;
		line-height: 35px;
		white-space: nowrap;
	}

	.wos-tabs a {
		box-sizing: border-box;
		background: linear-gradient(#fafbfd, #dde9f3);
		clip-path: polygon(0 0, calc(100% - 32px) 0, 100% 100%, 0 100%);
	}

	.wos-tabs .one {
		width: 216px;
		padding-left: 15px;
	}

	.wos-tabs .two {
		width: 266px;
		margin-left: -14px;
		padding-left: 28px;
	}

	.wos-tabs .three {
		width: 267px;
		margin-left: -12px;
		padding-left: 32px;
		background: #fff;
		color: #333;
	}

	.wos-tabs .four {
		width: 290px;
		margin-left: 70px;
		padding-left: 18px;
	}

	.sheet {
		background: #fff;
		overflow: hidden;
	}

	.subnav {
		display: flex;
		margin: 8px 18px 0;
		padding-bottom: 6px;
		border-bottom: 1px solid #c6c6c8;
		font-size: 21px;
		line-height: 42px;
	}

	.subnav a {
		padding: 0 15px;
		border-right: 1px solid #c6c6c8;
	}

	.subnav a:first-child {
		border-left: 1px solid #c6c6c8;
	}

	h1 {
		display: flex;
		gap: 5px;
		margin: 15px 0 0 43px;
		font-size: 34px;
		line-height: 40px;
		color: #ff9210;
	}

	sup {
		font-size: 20px;
		line-height: 24px;
	}

	.back-link {
		display: block;
		margin: 26px 0 4px 43px;
		font-size: 21px;
		font-weight: 700;
		line-height: 24px;
	}

	.report-head {
		margin: 0 187px 0 87px;
		border-top: 2px solid #c9c9cb;
		color: #3f3f42;
	}

	.topic {
		display: flex;
		align-items: center;
		gap: 34px;
		margin-top: 18px;
		font-size: 23px;
		line-height: 32px;
	}

	h2 {
		font-size: 28px;
		color: #ff9210;
	}

	.timespan {
		margin: 4px 0 0 222px;
		font-size: 19px;
		line-height: 24px;
	}

	.note {
		margin: 12px 112px 0 113px;
		padding: 0 0 13px 6px;
		border-bottom: 2px solid #c9c9cb;
		font-size: 20px;
		line-height: 24px;
		color: #3f3f42;
	}

	.overview {
		display: flex;
		justify-content: space-between;
		margin: 20px 171px 0 145px;
	}

	.charts {
		display: flex;
		gap: 61px;
	}

	figcaption {
		font-size: 28px;
		font-weight: 700;
		line-height: 32px;
		text-align: center;
		color: #38383b;
	}

	.chart {
		display: block;
		width: 520px;
		height: 425px;
		font-family: 'DejaVu Sans', Tahoma, sans-serif;
		font-size: 16px;
		fill: #222;
	}

	.stats {
		width: 513px;
		margin-top: 111px;
		border-collapse: collapse;
		align-self: flex-start;
		font-size: 20px;
		font-weight: 700;
		line-height: 22px;
		color: #111;
	}

	.stats th {
		height: 40px;
		padding: 0;
		text-align: right;
		white-space: nowrap;
	}

	.stats td {
		width: 52px;
		padding: 0 0 0 13px;
	}

	.stats td span,
	.dotted,
	.count strong {
		border-bottom: 2px dotted #88888c;
	}

	.stats .line {
		border-bottom: 2px solid #c9c9cb;
	}

	.stats .thick {
		border-bottom: 3px solid #c4c4c6;
	}

	.stats .links td {
		padding: 0 0 1px;
		font-weight: 400;
		line-height: 23px;
		text-align: right;
	}

	.links a {
		display: block;
	}

	.results {
		display: grid;
		grid-template-columns: 749fr 382fr 746fr;
		align-items: center;
		height: 47px;
		margin: 35px 44px 0 43px;
		border: solid #c9c9cb;
		border-width: 2px 0;
		font-size: 21px;
		color: #55555a;
	}

	.count strong {
		margin-left: 22px;
		font-size: 23px;
		color: #444;
	}

	.pager,
	.steps,
	.page-field {
		display: flex;
		align-items: center;
		white-space: nowrap;
	}

	.pager {
		justify-content: space-between;
	}

	.steps {
		gap: 2px;
	}

	.page-field {
		gap: 6px;
	}

	.steps svg {
		display: block;
		width: 22px;
		height: 24px;
	}

	.rule {
		width: 1px;
		height: 30px;
		background: #c9c9cb;
	}

	.pager input {
		box-sizing: border-box;
		width: 72px;
		height: 30px;
		padding: 0 4px;
		border: 2px solid #77777b;
		color: #111;
	}

	.go {
		width: 57px;
		height: 30px;
		margin-left: 6px;
		border: 2px solid #f7cba0;
		border-radius: 15px;
		background: linear-gradient(#fbe6d2, #fbd3aa);
		font-family: 'DejaVu Sans', Verdana, sans-serif;
		font-size: 17px;
		font-weight: 700;
		color: #5c4f44;
	}

	.sort {
		display: flex;
		align-items: center;
		justify-content: flex-end;
		gap: 10px;
	}

	.select {
		display: flex;
		box-sizing: border-box;
		width: 359px;
		height: 28px;
		border: 2px solid #77777b;
		color: #111;
	}

	select {
		flex: 1;
		appearance: none;
		padding: 0 6px;
		font-size: 20px;
	}

	.select-button {
		display: flex;
		align-items: center;
		justify-content: center;
		width: 22px;
		border: 1px solid #77777b;
		background: linear-gradient(#f1f1f3, #c9c9cf);
	}

	.table-clip {
		height: 39px;
		margin: 33px 84px 0 44px;
		overflow: hidden;
	}

	.cited {
		width: 100%;
		border-spacing: 8px 0;
		table-layout: fixed;
		font-size: 21px;
		line-height: 24px;
		color: #38383b;
	}

	.cited th {
		height: 54px;
		padding: 5px 0 0;
		background: #f2f1f3;
		vertical-align: top;
	}

	.cited svg {
		display: block;
		width: 14px;
		height: 20px;
		margin: 2px auto 0;
	}

	.cited .number {
		width: 82px;
	}

	.cited .year-cell {
		width: 56px;
	}

	.cited .total {
		width: 61px;
		background: #dcedf9;
		color: #111;
	}

	.cited .average {
		width: 153px;
		background: #e4e3e5;
	}

	.scrollbar {
		display: flex;
		flex-direction: column;
		width: 21px;
		padding: 0 1px;
		background: #f0eff1;
		color: #333;
	}

	.scrollbar button {
		height: 24px;
	}

	.up .caret {
		transform: rotate(180deg);
	}

	.above {
		flex: 56;
	}

	.thumb {
		display: flex;
		flex: 275;
		flex-direction: column;
		align-items: center;
		justify-content: center;
		gap: 2px;
		border: 1px solid #8b8b91;
		border-radius: 2px;
		background: linear-gradient(90deg, #f6f6f8, #e2e2e6 50%, #c4c4ca);
	}

	.thumb i {
		width: 9px;
		height: 2px;
		background: #66666c;
	}

	.below {
		flex: 602;
	}

	/* status bar and taskbar */
	.statusbar {
		display: flex;
		align-items: center;
		justify-content: space-between;
		box-sizing: border-box;
		height: 32px;
		padding: 0 0 2px 9px;
		border-top: 2px solid #8b8b8f;
		background: #f0eeef;
	}

	.panels {
		display: flex;
		align-self: stretch;
	}

	.panel {
		display: flex;
		align-items: center;
		padding: 0 4px;
		border-left: 1px solid #d2d0d3;
	}

	.prayer {
		gap: 12px;
		padding: 0 9px 0 6px;
	}

	.trio {
		gap: 8px;
		padding: 0 7px 0 5px;
	}

	.roomy {
		padding: 0 7px;
	}

	.zotero {
		font-family: Roboto, sans-serif;
		font-size: 24px;
		line-height: 24px;
	}

	.zotero b {
		font-weight: 400;
		color: #b3201f;
	}

	.taskbar {
		display: flex;
		align-items: center;
		height: 42px;
		background: linear-gradient(#8b9192, #4c5254 6%, #3a4042 46%, #060a0f 50%, #04070b);
		color: #fff;
	}

	.start {
		width: 56px;
		height: 48px;
		margin: -6px 0 0 14px;
		border-radius: 28px 28px 20px 20px;
		background: radial-gradient(circle at 50% 90%, #35b7f0, #1b5e97 45%, #3f6d8d 70%, #a9c6d8);
	}

	.start svg {
		width: 38px;
		height: 38px;
		vertical-align: middle;
	}

	.quick {
		display: flex;
		align-items: center;
		gap: 10px;
		width: 137px;
		padding-left: 22px;
	}

	.quick span {
		margin: -14px 0 0 18px;
		font-size: 20px;
		font-weight: 700;
	}

	.tasks {
		display: flex;
		flex: 0 1 1128px;
		gap: 6px;
	}

	.tasks button {
		display: flex;
		flex: 1;
		align-items: center;
		gap: 6px;
		min-width: 0;
		height: 38px;
		padding-left: 12px;
		border: 1px solid #8b9091;
		border-radius: 4px;
		background: linear-gradient(#777d7f, #4b5153 48%, #0a0f14 50%, #10171c);
	}

	.tasks [data-active='true'] {
		background: linear-gradient(#1c1d20, #33353a 48%, #050608 50%, #0c0e11);
	}

	.tray {
		display: flex;
		align-items: center;
		margin-left: auto;
		padding-right: 19px;
	}

	.chevron {
		width: 10px;
		height: 14px;
		margin: 0 12px 0 24px;
	}

	.tray-icons {
		display: flex;
		gap: 3px;
		margin: -4px 18px 0 0;
	}

	.system {
		margin-right: 10px;
	}

	/* slide footer */
	.slide-footer {
		position: relative;
		padding: 76px 0 30px;
		font-family: 'Liberation Sans', Arial, sans-serif;
		font-size: 34px;
		line-height: 41px;
		color: #898989;
	}

	.slide-footer p {
		padding-left: 16px;
		text-align: center;
	}

	.slide-number {
		position: absolute;
		top: 30px;
		right: 37px;
		display: flex;
		align-items: flex-end;
	}

	.slide-number span {
		margin: 0 -16px -6px 0;
	}

	.slide-number a {
		position: relative;
		border: 5px solid #385d8a;
		border-radius: 3px;
		background: #4f81bd;
	}

	.slide-number svg {
		display: block;
		width: 93px;
		height: 92px;
	}
</style>
